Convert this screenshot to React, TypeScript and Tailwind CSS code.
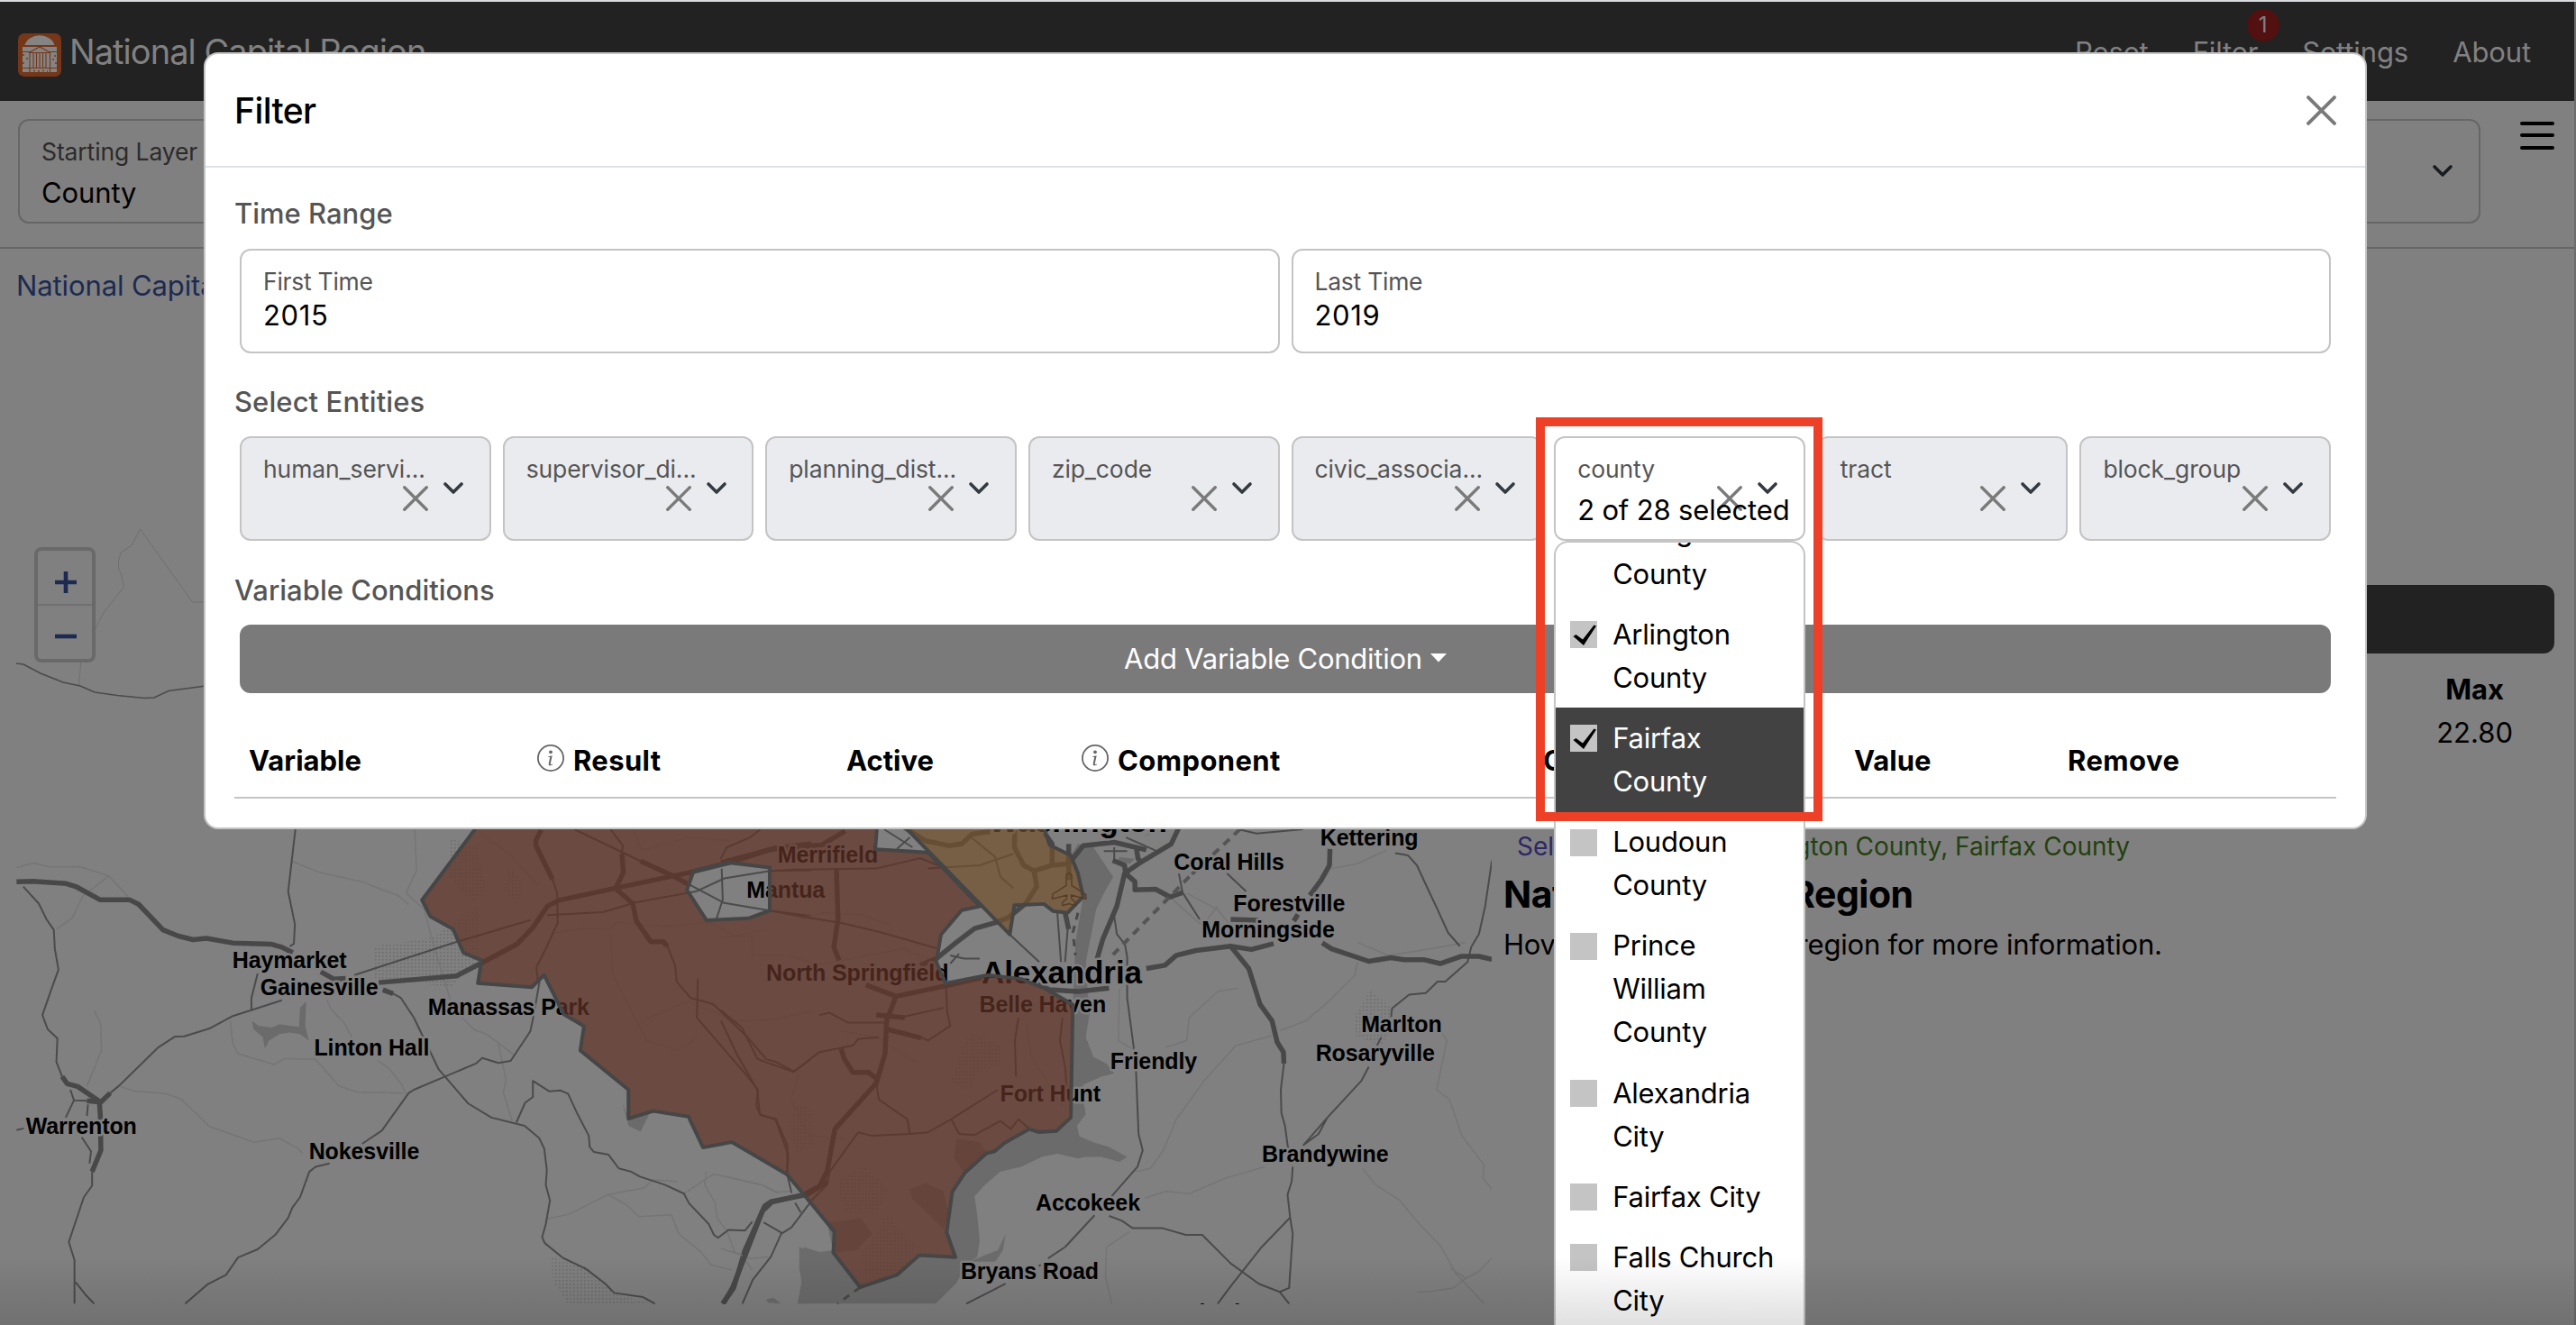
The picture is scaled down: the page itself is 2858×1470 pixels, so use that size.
import React from "react";

const entities = [
  { name: "human_servi..." },
  { name: "supervisor_di..." },
  { name: "planning_dist..." },
  { name: "zip_code" },
  { name: "civic_associa..." },
  { name: "county", open: true },
  { name: "tract" },
  { name: "block_group" },
];

const counties = [
  { name: "Prince George's County" },
  { name: "Arlington County", checked: true },
  { name: "Fairfax County", checked: true, active: true },
  { name: "Loudoun County" },
  { name: "Prince William County" },
  { name: "Alexandria City" },
  { name: "Fairfax City" },
  { name: "Falls Church City" },
];

/* Road geometry, on a grid of 1.742 x 2.751 units per pixel with its origin at (0, 900) and (800, 900). */
const westMajor = [
  "M32,215 L64,214 128,221 148,231 193,270 250,270 268,284 315,362 345,381 373,392 399,388 450,402 525,406 545,415 566,432",
  "M620,490 L645,512 668,510",
  "M732,523 L882,503 931,463 1000,405 1030,355 1058,290 1080,272 1210,228 1330,188 1409,157 1497,113 1568,100",
  "M740,545 L760,557",
  "M1046,57 L1036,88 1036,105 1068,208",
  "M1238,152 L1300,197 1330,222",
  "M1202,130 L1205,186 1190,236 1223,282 1230,335 1258,398 1282,398 1290,412",
  "M120,810 L130,832 150,840 192,885 M168,884 L195,888 213,860 M192,885 L194,930 195,1035 178,1100",
  "M1397,1503 L1418,1455 1440,1340 1478,1205 1490,1192 1560,1170 1600,1130",
];
const westMinor = [
  "M571,55 L557,245 570,345 568,405 560,412",
  "M45,230 L75,282 90,330 104,362 106,420 113,484 100,540 82,622 92,665 111,693 109,765 120,810",
  "M545,577 L450,625 405,663 356,687 338,688 305,722 230,838 213,860",
  "M498,495 L486,570 486,606",
  "M685,500 L870,405 1025,332",
  "M760,557 L775,570 800,630 848,788 905,892 950,935 1014,960 1042,997 1052,1030 1057,1095 1055,1140 1063,1188 1055,1260 1048,1300 1053,1318 1088,1363 1133,1397 1170,1442 1187,1470 1243,1483 1266,1503",
  "M637,1075 L610,1085 598,1100 580,1178 565,1210 557,1241 532,1293 498,1337 460,1362 437,1415 402,1443 358,1503",
  "M700,1015 L738,975 790,860 800,850 920,770 932,753 963,768 987,762 1025,672 1030,635 1043,520",
  "M998,950 L1015,890 1030,872 1030,823 1062,855 1083,852 1098,862 1115,920 1138,990 1140,1025 1148,1040 1176,1048 1196,1090 1220,1100 1237,1115 1285,1140 1322,1167 1332,1197 1370,1260 1380,1293 1388,1302 1408,1278 1440,1280 1454,1253",
  "M178,1100 L178,1143 162,1178 133,1315 144,1370 144,1503 M146,1437 L165,1475 182,1503",
  "M136,850 L143,882 168,884 M143,882 L127,935 M170,895 L168,930 M158,995 L176,1038 173,1075",
  "M32,973 L46,968",
  "M1068,208 L1077,250 1078,340 1055,420 1037,475 1040,520",
  "M1057,317 L1165,308 1230,278 1345,245 1400,205 1488,182 1568,180",
  "M1110,55 L1238,152 M1330,222 L1400,280 1488,303 1568,320",
  "M1180,55 L1204,105 1202,130 M1395,175 L1397,270 1385,328 M1393,145 L1405,110 1450,80 1470,55",
  "M1290,412 L1305,470 1308,520 1335,570 1378,588 1445,690 1482,758 1500,765 1535,795 1568,755",
  "M1349,510 L1347,630 1385,700 1440,800 1465,850 1462,900 1470,928 1500,940 1522,1020 1522,1110 1530,1165",
  "M1568,1190 L1530,1270 1510,1290 1490,1360 1455,1430 1435,1503 M1476,1255 L1512,1288 M1537,1195 L1548,1225",
];
const westFaint = [
  "M32,172 L65,158 95,170 155,169 210,197 247,260 M210,197 L160,260 140,325 110,360",
  "M802,55 L805,180 785,250 820,300 840,420 862,530 870,575",
  "M563,152 L620,188 700,215 740,240 770,258 790,285",
  "M182,608 L195,650 196,730 168,840",
  "M445,640 L450,710 460,740 530,773 550,755 610,757 655,838 690,857 780,860",
  "M632,575 L640,605 665,645 680,690 M730,760 L752,785 775,830 785,862",
  "M232,840 L260,854 320,862 350,878 405,962 490,1010 540,998 575,1028 585,1045",
  "M893,630 L918,668 940,680 995,745 M963,708 L978,820 973,860 990,945",
  "M1055,1245 L1100,1230 1175,1170 1245,1150 1262,1125 1310,1130",
  "M1175,1170 L1210,1200 1235,1237 1298,1232 1312,1290 1355,1345 1375,1385 1415,1400",
  "M1322,1167 L1380,1107 1475,1142 1500,1163 1525,1160 M1365,1100 L1362,1140 1382,1195 1387,1245 1405,1280 1420,1345 1450,1365 1485,1360",
  "M1068,372 L1130,357 1180,362 1190,340 1290,352 1370,338 1420,380 1480,360",
  "M930,70 L985,130 1040,230 M1225,60 L1240,120 1330,80 1410,90",
  "M1180,370 L1185,500 1230,640 1250,700 1310,730 1350,690",
  "M1240,640 L1330,580 1420,640 1500,635 1568,610",
];
const eastMajor = [
  "M0,157 L95,117 148,108 195,103 240,60",
  "M223,175 L226,330 218,415 228,455",
  "M355,50 L395,90 440,105 465,100 485,70 520,62",
  "M568,55 L567,110 585,165 605,182 640,165 672,160 700,105 760,95 822,118",
  "M605,182 L610,230 590,280 555,325 530,340 490,358 455,400 416,450 385,470",
  "M620,55 L640,100 640,165 M672,100 L672,210",
  "M885,50 L870,100 812,155 780,190 765,290 738,390 727,450",
  "M757,150 L780,165 782,190 800,215 800,240 840,238 868,262 892,248",
  "M803,115 L806,145 812,155",
  "M280,530 L338,565 434,533 518,503 600,520 635,545 690,550 750,540",
  "M338,565 L320,640 317,740 300,830 220,970 205,1100 190,1145 160,1170 98,1193 80,1220 48,1350 22,1455 4,1503",
  "M300,622 L355,630 M320,665 L387,692 M232,725 L238,755 255,797 285,797 300,815",
  "M822,480 L858,470 880,440 918,425 985,412 1025,422 1068,404",
  "M985,412 L1020,480 1042,590 1065,640 1075,705 1087,735 1088,770",
  "M1162,402 L1180,420 1252,458 1295,447 1320,453 1358,453 1390,465 1430,443 1465,443 1490,452",
  "M1177,115 L1176,165 1160,210 1138,257",
  "M985,330 L1040,333 M1107,335 L1115,315",
  "M665,310 L672,360",
];
const eastMinor = [
  "M94,182 L140,178 300,175 385,143 430,172 500,285",
  "M94,303 L150,320 235,342 310,370 416,418",
  "M1303,128 L1328,135 1345,165 1367,240 1385,300 1405,370 1428,412",
  "M1490,150 L1477,290 1465,375 1450,415 1443,460 1400,520 1385,520 1362,555 1330,560 1297,602 1295,628",
  "M1276,690 L1268,715 M1252,780 L1238,822 1172,935 1125,1020 M1172,935 L1155,985 1125,1020",
  "M1088,770 L1082,850 1083,920 1090,960 1096,1030",
  "M1105,1085 L1103,1130 1095,1170 1100,1240 1045,1330 985,1450 960,1503 M1100,1240 L1105,1290 1098,1455 1080,1467 1040,1443 985,1380 930,1293 898,1293 852,1272 795,1272 775,1250 750,1235",
  "M1080,1467 L1098,1503",
  "M722,1233 L665,1330 632,1365 M614,1388 L618,1384 M550,1442 L474,1503",
  "M780,400 L785,445 785,570 798,725 M802,790 L807,985 815,1035 805,1085 755,1175",
  "M558,376 L615,460 M760,320 L765,375 780,405",
  "M650,310 L657,460 M670,360 L665,460 M435,530 L437,610 443,655 400,700 387,690 M430,600 L340,632",
  "M190,622 L210,615 245,645 317,645 M0,608 L40,660 70,755 85,765 140,795 190,735 255,715 265,695 305,690",
  "M300,830 L305,880 360,940 365,985 290,990 265,980 210,1100 205,1140 170,1195 M445,940 L460,985 490,988 540,945 560,970 575,940 596,970",
  "M535,850 L445,940 400,980 365,985 M575,630 L568,700 570,810 M660,630 L655,700 665,780 668,850",
  "M0,640 L30,740 70,850 75,925 105,940 130,1050 127,1110",
  "M740,122 L785,122 M760,110 L760,150 M783,80 L840,120 M978,190 L1015,245 M885,190 L892,248 925,330",
  "M1000,55 L1035,68 1125,55 M443,440 L470,450 500,450 M460,435 L443,465",
  "M480,75 L530,140 540,200 565,235 M400,175 L500,165 565,130 M315,55 L370,110 M340,115 L365,80",
];
const eastFaint = [
  "M1390,670 L1403,700 1383,850 1408,880 1432,990 1475,1080 1473,1120 1490,1155",
  "M1080,670 L1130,640 1175,580 1225,500 1230,460 M1065,685 L995,715 970,760 935,820 880,940 855,1035 830,1090 800,1100",
  "M820,1180 L860,1160 905,1167 975,1120 1050,1085 M1240,1090 L1265,1140 1310,1185 1350,1260 1390,1325 1420,1410 1475,1503",
  "M1490,1363 L1465,1405 1440,1425 1415,1455 1375,1465 1345,1468 M1410,1395 L1440,1425",
  "M790,1283 L745,1330 743,1420 755,1503 M1000,540 L960,550 905,630 900,700 860,720",
  "M770,540 L768,700 800,730 M1285,120 L1230,160 1180,175 M870,265 L930,350 960,290 M1230,400 L1290,440 1370,420 1440,400",
  "M230,670 L300,690 380,770 M130,440 L190,470 280,440 350,420 416,460 M150,330 L200,310 270,315 330,350",
  "M0,385 L60,380 60,440 120,440 M150,800 L135,880 170,990 240,1000 M590,650 L600,750 640,850 660,900",
  "M10,1115 L80,1140 110,1165 M0,1335 L40,1355 60,1400 M900,250 L960,300 1000,380 M820,75 L850,50",
];

const water = [
  // Potomac river
  "M690,100 L720,110 745,170 758,200 740,250 725,300 715,380 705,460 712,620 705,690 720,750 745,770 760,800 735,810 700,835 700,880 705,925 688,960 695,1010 715,1050 690,1060 650,1045 620,1055 580,1085 540,1100 510,1140 490,1175 495,1230 500,1310 495,1360 475,1380 455,1440 415,1503 148,1503 155,1440 152,1370 160,1330 190,1345 217,1340 269,1453 340,1415 383,1355 453,1361 436,1285 447,1161 471,1104 513,1044 596,970 648,976 676,935 680,590 685,400 700,260 676,135 Z",
  "M668,1020 L690,990 720,1010 750,1025 785,1055 770,1070 735,1055 700,1055 670,1035 Z",
  "M455,1000 L500,1010 512,1040 471,1104 450,1060 Z",
  "M365,1155 L395,1135 430,1160 440,1230 430,1275 395,1220 370,1185 Z",
  "M205,1255 L270,1243 292,1290 262,1340 217,1347 Z",
  "M770,140 L800,145 790,160 765,155 Z",
  "M480,1375 L510,1355 535,1340 550,1290 545,1340 530,1375 Z",
  "M700,190 L730,185 700,240 Z",
];
const lake =
  "M487,640 L500,655 525,660 540,650 560,655 578,658 580,600 592,580 590,655 597,700 580,680 560,675 540,680 520,700 512,725 508,690 490,665 Z M505,630 L508,650 M1203,890 L1215,938 1255,925 1238,978 1215,960 Z M1545,1330 L1568,1345 1568,1503 1542,1503 1555,1450 1545,1400 Z M1480,1490 L1495,1485 1510,1503 1485,1500 Z";

const labelsSmall: [string, number, number][] = [
  ["Haymarket", 449, 480],
  ["Gainesville", 503, 563],
  ["Manassas Park", 827, 623],
  ["Linton Hall", 607, 747],
  ["Warrenton", 50, 986],
  ["Nokesville", 597, 1062],
  ["Merrifield", 1503, 159],
  ["Mantua", 1443, 265],
  ["North Springfield", 1481, 518],
  ["Belle Haven", 1893, 615],
  ["Kettering", 2552, 107],
  ["Coral Hills", 2269, 180],
  ["Forestville", 2384, 308],
  ["Morningside", 2323, 386],
  ["Marlton", 2631, 676],
  ["Rosaryville", 2543, 764],
  ["Friendly", 2146, 789],
  ["Fort Hunt", 1933, 886],
  ["Brandywine", 2439, 1071],
  ["Accokeek", 2002, 1220],
  ["Bryans Road", 1857, 1428],
  ["St. Charles", 2220, 1556],
];

const fairfax =
  "M-459,20 L-578,271 -562,321 -518,360 -498,432 -463,455 -470,525 -366,537 -342,500 -304,620 -265,656 -272,730 -179,850 -179,938 -131,915 -63,932 -35,1026 21,1010 127,1108 160,1170 219,1283 217,1347 269,1453 340,1415 383,1355 453,1361 436,1285 447,1161 471,1104 513,1044 529,1038 548,1012 596,970 613,979 648,976 676,935 680,590 625,540 580,512 516,500 434,525 416,460 425,377 465,302 500,290 400,126 298,116 303,20 Z M-53,182 L15,157 94,172 94,303 53,327 -28,333 -66,240 Z";
const arlington =
  "M338,20 L558,376 567,287 624,283 642,305 670,310 700,260 690,190 676,135 635,103 618,20 Z";

const WEST = "translate(0 900) scale(0.57398 0.36352)";
const EAST = "translate(800 900) scale(0.57398 0.36352)";

function Roads({ paths, color, width }: { paths: string[]; color: string; width: number }) {
  return (
    <g fill="none" stroke={color} strokeWidth={width} strokeLinejoin="round">
      {paths.map((d) => (
        <path key={d} d={d} vectorEffect="non-scaling-stroke" />
      ))}
    </g>
  );
}

function MapView() {
  return (
    <svg viewBox="18 580 1637 867" className="block h-[867px] w-[1637px]">
      <defs>
        <pattern id="dots" width="4" height="4" patternUnits="userSpaceOnUse">
          <rect width="1.6" height="1.6" fill="#6c6c6c" />
        </pattern>
      </defs>
      <path
        d="M480,1040 L530,1005 L530,1070 L500,1095 L415,1085 L415,1050 L450,1045 Z M612,1395 L650,1405 L680,1435 L726,1447 L630,1447 L613,1420 Z M500,930 L530,940 L540,990 L520,1000 L497,970 Z M565,960 L580,980 L575,1005 L558,990 Z M1520,1098 L1545,1120 L1535,1160 L1505,1150 L1502,1130 Z M1075,1145 L1110,1160 L1112,1180 L1085,1190 L1075,1210 L1055,1200 L1065,1170 Z M885,1225 L900,1230 L902,1270 L885,1280 L875,1250 Z M930,1310 L960,1295 L985,1320 L975,1345 L935,1345 Z M985,1350 L1015,1380 L1010,1410 L960,1415 L955,1390 Z"
        fill="url(#dots)"
      />
      <g transform={EAST} fill="#6b6b6b">
        {water.map((d) => (
          <path key={d} d={d} />
        ))}
      </g>
      <g transform={WEST}>
        <path d={lake} fill="#6b6b6b" />
        <Roads paths={westFaint} color="#757575" width={1.5} />
        <Roads paths={westMinor} color="#4b4b4b" width={2} />
        <Roads paths={westMajor} color="#484848" width={5.5} />
      </g>
      <g transform={EAST}>
        <Roads paths={eastFaint} color="#757575" width={1.5} />
        <Roads paths={eastMinor} color="#4b4b4b" width={2} />
        <Roads paths={eastMajor} color="#484848" width={5.5} />
        <path d="M1003,55 L905,200 M905,200 L750,450" fill="none" stroke="#555555" strokeWidth="4" strokeDasharray="9 7" vectorEffect="non-scaling-stroke" />
        <path d="M690,310 L680,370 685,440 M269,1453 L225,1503" fill="none" stroke="#4a4a4a" strokeWidth="3" strokeDasharray="8 7" vectorEffect="non-scaling-stroke" />
      </g>
      <g fill="none" stroke="#6f6f6f" strokeWidth="1">
        <path d="M226,668 L213.500,668 L155.500,587 L146,605 L134,613 L131.500,622 L131.500,631 L134.500,637 L137.500,651 L114,681 L104,701" />
        <path d="M90,731 L87.500,760" />
      </g>
      <path d="M18,736 L26,737 L45,747 L70,757 L89,761 L105,768 L130,771.500 L160,774.500 L171,774 L187,766.500 L228,761" fill="none" stroke="#4b4b4b" strokeWidth="1.600" />
      <g fontFamily="'Liberation Sans', sans-serif" fontWeight="700" fill="#000" stroke="#808080" strokeWidth="5" strokeLinejoin="round" style={{ paintOrder: "stroke" }}>
        {labelsSmall.map(([text, x, y]) => (
          <text key={text} x={x * 0.57398} y={899.5 + y * 0.36352} fontSize="25">
            {text}
          </text>
        ))}
        <text x="1089" y="1091" fontSize="35">Alexandria</text>
        <text x="1097" y="923" fontSize="35">Washington</text>
      </g>
      <g transform={EAST} stroke="#464646" strokeWidth="4" strokeLinejoin="round">
        <path d={fairfax} fill="#623326" fillOpacity="0.7" fillRule="evenodd" vectorEffect="non-scaling-stroke" />
        <path d={arlington} fill="#73512c" fillOpacity="0.7" vectorEffect="non-scaling-stroke" />
      </g>
      <g transform="translate(940 910) scale(0.33333)" fill="none" stroke="#553c22" strokeWidth="4" strokeLinejoin="round">
        <path d="M729,182 Q738,170 747,182 L747,217 L795,248 L795,262 L745,249 L747,262 L760,274 L760,284 L738,278 L716,284 L716,274 L730,262 L732,249 L682,262 L684,246 L729,217 Z" />
      </g>
    </svg>
  );
}

function Cross({ size, className }: { size: number; className?: string }) {
  return (
    <svg width={size} height={size} viewBox="0 0 16 16" className={className}>
      <path d="M1,1 L15,15 M15,1 L1,15" stroke="#7a7a7a" strokeWidth="1.900" strokeLinecap="round" fill="none" />
    </svg>
  );
}

function Chevron({ className, color }: { className?: string; color: string }) {
  return (
    <svg width="24" height="15" viewBox="0 0 24 15" className={className}>
      <path d="M3,3 L12,12 L21,3" stroke={color} strokeWidth="3.600" strokeLinecap="round" strokeLinejoin="round" fill="none" />
    </svg>
  );
}

function Info() {
  return (
    <svg width="30" height="30" viewBox="0 0 30 30" className="mr-[10px] -mt-[8px] shrink-0">
      <circle cx="15" cy="15" r="14.100" fill="none" stroke="#666666" strokeWidth="1.800" />
      <circle cx="15" cy="8.300" r="1.900" fill="#666666" />
      <path d="M12.400,13.200 L16.700,12.200 L14.600,22 L17.200,21.700 L17,22.600 Q12.300,24.600 12.700,21.500 L14.200,13.900 L12.300,13.900 Z" fill="#666666" />
    </svg>
  );
}

function Logo() {
  return (
    <svg width="48" height="48" viewBox="0 0 48 48" className="mt-[8px] shrink-0">
      <rect width="48" height="48" rx="7" fill="#753718" />
      <path d="M7.500,13 A17,14 0 0 1 40.500,13 Z" fill="#848484" />
      <rect x="5" y="15" width="38" height="28" fill="#848484" />
      <g stroke="#753718" strokeWidth="1.100" fill="none">
        <path d="M5,20.500 H14 M34,20.500 H43 M12,21.500 L24,15 L36,21.500 M12,21.500 H36 M13,21.500 V43 M35.500,21.500 V43 M17,22 V38 M20.500,22 V38 M24,22 V38 M27.500,22 V38 M31,22 V38 M5,38.500 H43" />
        <path d="M5,24 h2 M9,28 h2 M5,33 h2 M40,25 h2 M38,29 h2 M41,33 h2 M17,41.500 h2 M22,42 h2 M27,41.500 h2 M32,42 h1" strokeWidth="1.600" />
      </g>
    </svg>
  );
}

function TimeField({ label, value }: { label: string; value: string }) {
  return (
    <div className="h-[116px] flex-1 rounded-[12px] border-2 border-[#c4c4c4] bg-white pt-4 pl-6">
      <div className="text-[26.5px] leading-[36px] tracking-[-0.01em] text-[#555555]">{label}</div>
      <div className="text-[31px] leading-[40px] tracking-[0.02em] text-black">{value}</div>
    </div>
  );
}

function CountyMenu() {
  return (
    <div className="absolute top-[114px] -left-[2px] z-10 h-[880px] w-[279px] overflow-hidden rounded-t-[16px] border-2 border-[#c4c4c4] bg-white whitespace-normal">
      <div className="-mt-[95px]">
        {counties.map((c) => (
          <div
            key={c.name}
            className={
              c.active
                ? "flex bg-[#424242] py-[9.6px] pr-6 pl-[15.5px] text-white"
                : "flex py-[9.6px] pr-6 pl-[15.5px] text-black"
            }
          >
            <div className="mt-[9.500px] mr-[17.500px] h-[30px] w-[30px] shrink-0 bg-[#c4c4c4]">
              {c.checked && (
                <svg viewBox="0 0 30 30" className="h-[30px] w-[30px]">
                  <path d="M3.500,17 L6.500,15 L14,20.500 L26.500,4.500 L29,5.500 L15,27 Z" fill="#000" />
                </svg>
              )}
            </div>
            <div className="text-[31px] leading-[48px] tracking-[-0.007em]">{c.name}</div>
          </div>
        ))}
      </div>
    </div>
  );
}

function FilterModal() {
  return (
    <div className="absolute top-[58px] left-[226px] h-[862px] w-[2400px] rounded-[16px] border-2 border-[#c4c4c4] bg-white">
      <div className="flex h-[126px] items-center justify-between border-b-2 border-[#dee2e6] pr-8 pl-[32px]">
        <div className="text-[39px] leading-none font-medium tracking-[-0.015em] text-black">Filter</div>
        <Cross size={33} />
      </div>
      <div className="px-8 pt-[27px]">
        <div className="text-[31px] leading-[48px] font-medium tracking-normal text-[#555555]">Time Range</div>
        <div className="mx-[6px] mt-[15px] flex gap-[13px]">
          <TimeField label="First Time" value="2015" />
          <TimeField label="Last Time" value="2019" />
        </div>
        <div className="mt-[30px] text-[31px] leading-[48px] font-medium tracking-[0.003em] text-[#555555]">Select Entities</div>
        <div className="mx-[6px] mt-[14px] grid grid-cols-8 gap-[13px]">
          {entities.map((e) => (
            <div
              key={e.name}
              className={
                e.open
                  ? "relative h-[116px] rounded-[12px] border-2 border-[#c4c4c4] bg-white pt-4 pl-6 whitespace-nowrap"
                  : "relative h-[116px] rounded-[12px] border-2 border-[#c4c4c4] bg-[#eaebef] pt-4 pl-6 whitespace-nowrap"
              }
            >
              <Cross size={28} className="absolute top-[53px] left-[179px]" />
              <Chevron color="#343a40" className="absolute top-[48px] left-[223px]" />
              <div className="relative text-[26.5px] leading-[36px] tracking-[-0.004em] text-[#555555]">{e.name}</div>
              {e.open && (
                <>
                  <div className="relative mt-1 text-[31px] leading-[48px] tracking-[-0.005em] text-black">2 of 28 selected</div>
                  <CountyMenu />
                </>
              )}
            </div>
          ))}
        </div>
        <div className="mt-[31px] text-[31px] leading-[48px] font-medium tracking-normal text-[#555555]">Variable Conditions</div>
        <div className="mx-[6px] mt-[14px] flex h-[76px] items-center justify-center gap-[9px] rounded-[12px] bg-[#7a7a7a] text-[31px] tracking-[-0.008em] text-white">
          <span>Add Variable Condition</span>
          <svg width="18" height="10" viewBox="0 0 18 10" className="-mt-[2px]">
            <path d="M0,0 H18 L9,9.500 Z" fill="#fff" />
          </svg>
        </div>
        <div className="mt-[36px] grid h-[81px] grid-cols-[320px_343px_261px_513px_345px_237px_1fr] items-center border-b-2 border-[#c4c4c4] text-[31px] font-bold tracking-normal text-black">
          <div className="pl-[16px]">Variable</div>
          <div className="flex items-center pl-4 tracking-[0.012em]"><Info />Result</div>
          <div className="pl-4">Active</div>
          <div className="flex items-center pl-4 tracking-[0.013em]"><Info />Component</div>
          <div className="pl-[15px]">Operator</div>
          <div className="pl-[15px]">Value</div>
          <div className="pl-[15px] tracking-[0.014em]">Remove</div>
        </div>
      </div>
    </div>
  );
}

export default function App() {
  return (
    <div className="relative flex h-[1470px] w-[2858px] flex-col overflow-hidden bg-[#808080] font-['Inter',sans-serif] tracking-[-0.007em] text-black">
      <header className="flex h-[112px] items-center justify-between border-t-2 border-[#d9dbde] bg-[#222222] pr-[50px] pl-[20px] text-[#818181]">
        <div className="flex items-center gap-[9px]">
          <Logo />
          <span className="text-[38px] tracking-[-0.025em]">National Capital Region</span>
        </div>
        <nav className="flex items-center gap-[49px] pt-[2px] text-[31px]">
          <span>Reset</span>
          <span className="relative">
            Filter
            <span className="absolute -top-[25px] left-[60px] flex h-[36px] w-[36px] items-center justify-center rounded-full bg-[#521010] text-[24px]">
              1
            </span>
          </span>
          <span>Settings</span>
          <span>About</span>
        </nav>
      </header>
      <div className="flex h-[164px] items-start border-b-2 border-[#666666] pt-5 pl-5">
        <div className="flex h-[116px] w-[2732px] items-start justify-between rounded-[12px] border-2 border-[#666666] pt-4 pr-[28px] pl-[24px]">
          <div>
            <div className="text-[26.5px] leading-[36px] text-[#2b2b2b]">Starting Layer</div>
            <div className="mt-1 text-[31px] leading-[48px]">County</div>
          </div>
          <Chevron color="#1a1d20" className="mt-[32px]" />
        </div>
        <div className="mt-[2.500px] ml-[44px] flex flex-col gap-[9.500px]">
          <div className="h-[4px] w-[38px] rounded-full bg-black" />
          <div className="h-[4px] w-[38px] rounded-full bg-black" />
          <div className="h-[4px] w-[38px] rounded-full bg-black" />
        </div>
      </div>
      <main className="flex flex-1 justify-between pr-[24px] pl-[18px]">
        <div className="w-[1637px]">
          <div className="pt-[17px] text-[31px] leading-[48px] text-[#1c2a52]">National Capital Region</div>
          <div className="relative mt-[239px]">
            <MapView />
            <div className="absolute top-[27px] left-[20px] flex h-[128px] w-[68px] flex-col rounded-[8px] border-4 border-[#696969] bg-[#808080]">
              <div className="flex flex-1 items-center justify-center border-b-2 border-[#6f6f6f] pt-[8px] pl-[2px]">
                <svg width="26" height="26" viewBox="0 0 26 26">
                  <path d="M1,14 H25 M13,2 V26" stroke="#1c2a52" strokeWidth="4.600" />
                </svg>
              </div>
              <div className="flex flex-1 items-center justify-center pt-[8px] pl-[2px]">
                <svg width="26" height="26" viewBox="0 0 26 26">
                  <path d="M1,13 H25" stroke="#1c2a52" strokeWidth="4.600" />
                </svg>
              </div>
            </div>
          </div>
        </div>
        <div className="w-[1166px] pt-[373px]">
          <div className="h-[76px] rounded-[12px] bg-[#222222]" />
          <div className="flex justify-end pt-[16px] pr-[46px]">
            <div className="text-center text-[31px] leading-[48px] tracking-normal">
              <div className="font-bold">Max</div>
              <div>22.80</div>
            </div>
          </div>
          <div className="mt-[83px] ml-[15px] flex w-[680px] justify-between text-[28px] leading-[38px] tracking-normal">
            <span className="text-[#2c2766]">Selected Entities:</span>
            <span className="text-[#24400f]">Arlington County, Fairfax County</span>
          </div>
          <div className="mt-[9px] text-[41px] leading-[50px] font-bold tracking-[-0.012em]">National Capital Region</div>
          <div className="mt-[7px] text-[31px] leading-[48px] tracking-[-0.0065em]">Hover over or select a region for more information.</div>
        </div>
      </main>
      <div className="absolute top-[2px] right-0 h-full w-[2px] bg-[#6c6c6c]" />
      <FilterModal />
      <div className="absolute top-[463px] left-[1704px] z-20 h-[448px] w-[318px] border-[10px] border-[#ed4026]" />
      <div className="pointer-events-none absolute inset-x-0 bottom-0 z-20 h-[76px] bg-linear-to-b from-black/0 to-black/12" />
    </div>
  );
}
